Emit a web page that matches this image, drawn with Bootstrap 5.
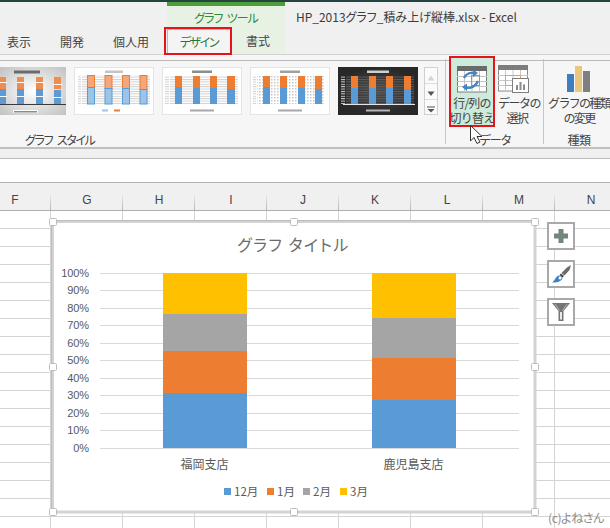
<!DOCTYPE html>
<html lang="ja">
<head>
<meta charset="utf-8">
<title>Excel</title>
<link rel="stylesheet" href="https://cdn.jsdelivr.net/npm/bootstrap@5.3.0/dist/css/bootstrap.min.css">
<style>
html,body{margin:0;width:610px;height:528px;overflow:hidden;background:#fff}
body{font-family:"Noto Sans CJK JP","Liberation Sans",sans-serif;font-size:12px;line-height:16px;color:#444;font-feature-settings:"palt"}
.top-area{height:55px;background:#f0f0f0;border-top:2px solid #24453f;border-bottom:1px solid #d2d2d2}
.tab-left{width:167px;gap:29px;padding:0 0 4px 7px}
.tool-group{width:118px;background:#e7f1e4;border-top:4px solid #4c9f38;position:relative}
.tool-name{color:#2f8a3a;text-align:center;padding-top:4px;height:23px;letter-spacing:-1.1px;word-spacing:3px;font-size:12px}
.ctx-tab{height:25px;padding-top:4px;text-align:center}
.tab-active{width:64px;background:#f4f4f4;border:1px solid #b9b9b9;border-bottom:0;color:#1f7a3d;letter-spacing:-1.4px}
.tab-plain{flex:1}
.red-mark{position:absolute;border:2px solid #e8131a;pointer-events:none}
.mark-tab{left:-3px;top:21px;width:68px;height:28px}
.doc-title{padding:7px 0 0 11px;letter-spacing:-.02px;white-space:nowrap;font-size:12px;color:#3c3c3c}
.ribbon{height:94px;background:#f6f6f6;border-bottom:2px solid #c0c0c0}
.ribbon-band{height:6px;border-bottom:1px solid #b9b9b9}
.ribbon-body{height:87px}
.gal-group{width:445px;height:85px;position:relative}
.gal{gap:8px;padding-top:6px;height:66px}
.thumb{display:block;flex:none;background:#fff}
.gal-scroll{width:14px;height:48px;margin-left:-2px;border:1px solid #d0d0d0;background:#fbfbfb}
.scroll-cell{height:16px;line-height:16px;text-align:center;border-bottom:1px solid #dcdcdc}
.scroll-cell:last-child{border:0}
.group-label{text-align:center;font-size:12px;line-height:16px;padding-top:5px}
.gal-label{padding-left:25px;letter-spacing:-1.3px;word-spacing:3px;text-align:left}
.data-group{width:99px;border-left:1px solid #c6c6c6;border-right:1px solid #c6c6c6;height:85px;margin-top:-2px;position:relative}
.rb-btn{display:block;height:71px;margin-top:-3px;padding:7px 0 0;border:0;background:transparent;color:#444;font-size:12px;line-height:15px;text-align:center;white-space:nowrap}
.btn-switch{width:46px;margin-left:3px;margin-right:3px;background:#cdeadb;position:relative;letter-spacing:-.8px}
.btn-select{width:38px;letter-spacing:-1.5px}
.mark-btn{left:0;top:0;right:0;bottom:0}
.rb-btn svg{display:block;margin:0 auto 2px}
.data-label{letter-spacing:-1px;padding-left:1px}
.type-group{width:66px;position:relative;margin-top:-2px}
.btn-type{width:66px;padding-left:4px;letter-spacing:-1.7px}
.type-label{padding-left:4px;letter-spacing:-.4px}
.sub-band{height:10px;background:#f0f0f0;border-bottom:1px solid #bcbcbc}
.formula{height:24px;background:#fff;border-bottom:1px solid #b4b4b4}
.col-head{height:28px;background:#f0f0f0;border-bottom:1px solid #b0b0b0;font-family:"Liberation Sans",sans-serif;font-size:12px;margin:0;overflow:hidden}
.col-cell{flex:0 0 72px;text-align:center;line-height:34px;position:relative;color:#444}
.col-cell:first-child{margin-left:-21px}
.col-cell::after{content:"";position:absolute;right:0;top:10px;bottom:0;width:1px;background:linear-gradient(#f0f0f0,#b5b5b5)}
.sheet{position:relative;height:317px;background-color:#fff;background-image:linear-gradient(to left,#d4d4d4 1px,transparent 1px),linear-gradient(to top,#d4d4d4 1px,transparent 1px);background-size:72px 18px;background-position:-21px 0}
.chart-float{position:absolute;left:48px;top:6px;display:block}
.chart-float text{font-family:"Noto Sans CJK JP","Liberation Sans",sans-serif;fill:#595959;font-feature-settings:"palt"}
.chart-float .ax text{font-family:"Liberation Sans",sans-serif;font-size:11px;letter-spacing:-.1px}
.chart-float .chart-name{fill:#6c6c6c;letter-spacing:1.5px}
.side-tools{position:absolute;left:547px;top:11px;gap:10px}
.side-btn{width:28px;height:28px;padding:0;background:#fff;border:2px solid #a9a9a9;border-radius:0;display:flex;align-items:center;justify-content:center}
.stamp{position:absolute;left:548px;top:299px;font-size:12px;color:#8c8c8c;line-height:16px;letter-spacing:-.4px}
.pointer{position:absolute;left:466px;top:122px;display:block}
</style>
</head>
<body>
<div class="position-relative">
<div class="top-area d-flex">
  <div class="tab-left d-flex align-items-end"><span>表示</span><span>開発</span><span>個人用</span></div>
  <div class="tool-group">
    <div class="tool-name">グラフ ツール</div>
    <div class="d-flex">
      <div class="ctx-tab tab-active">デザイン</div>
      <div class="ctx-tab tab-plain">書式</div>
    </div>
    <div class="red-mark mark-tab"></div>
  </div>
  <div class="doc-title">HP_2013グラフ_積み上げ縦棒.xlsx - Excel</div>
</div>
<div class="ribbon">
  <div class="ribbon-band"></div>
  <div class="ribbon-body d-flex">
    <div class="gal-group">
      <div class="gal d-flex">
        <svg class="thumb" width="66" height="48" viewBox="14 0 66 48">
          <defs>
            <radialGradient id="g1" r=".75"><stop offset="0" stop-color="#fff"/><stop offset="1" stop-color="#bdbdbd"/></radialGradient>
            <pattern id="hat" width="3" height="3" patternUnits="userSpaceOnUse"><rect width="3" height="3" fill="#fff"/><rect width="1.5" height="1.5" fill="#c8c8c8"/></pattern>
            <pattern id="lines" width="4" height="2.4" patternUnits="userSpaceOnUse"><rect y="0" width="4" height="1" fill="#cfcfcf"/></pattern>
            <pattern id="darklines" width="4" height="2.4" patternUnits="userSpaceOnUse"><rect width="4" height="1" fill="#5e5e5e"/></pattern>
            <radialGradient id="g5"><stop offset="0" stop-color="#4a4a4a"/><stop offset="1" stop-color="#282828"/></radialGradient>
          </defs>
          <rect x="14" width="66" height="48" fill="url(#g1)"/>
          <rect x="28" y="3.5" width="26" height="3" fill="#6b6b6b"/>
          <g fill="#f08d4c"><rect x="13" y="10" width="7" height="12"/><rect x="31" y="10" width="7" height="12"/><rect x="50" y="10" width="7" height="12"/><rect x="68" y="10" width="7" height="12"/></g>
          <g fill="#5f9ad2"><rect x="13" y="22" width="7" height="15"/><rect x="31" y="22" width="7" height="15"/><rect x="50" y="22" width="7" height="15"/><rect x="68" y="23" width="7" height="14"/></g>
          <g fill="#fff"><rect x="30" y="15" width="9" height="1"/><rect x="49" y="15" width="9" height="1"/><rect x="67" y="17" width="9" height="1"/><rect x="30" y="29" width="9" height="1"/><rect x="49" y="29" width="9" height="1"/><rect x="67" y="30" width="9" height="1"/><rect x="14" y="29" width="7" height="1"/><rect x="14" y="15" width="7" height="1"/></g>
          <rect x="14" y="37" width="66" height="1" fill="#3a3a3a"/>
          <rect x="27" y="43" width="25" height="3" fill="#fff"/><rect x="28" y="44" width="23" height="1.5" fill="#8a8a8a"/>
        </svg>
        <svg class="thumb" width="80" height="48" viewBox="0 0 80 48">
          <rect x=".5" y=".5" width="79" height="47" fill="#fff" stroke="#e4e4e4"/>
          <rect x="31" y="3.5" width="18" height="2.5" fill="#c4c4c4"/>
          <rect x="8" y="8" width="68" height="29" fill="url(#lines)"/>
          <rect x="4" y="8" width="3" height="29" fill="url(#lines)"/>
          <g fill="#f4a77d" stroke="#ed7d31"><rect x="13.5" y="8.5" width="7" height="12"/><rect x="31" y="8.5" width="7" height="13"/><rect x="48.5" y="8.5" width="7" height="13"/><rect x="66" y="8.5" width="7" height="14"/></g>
          <g fill="#9dc3e6" stroke="#5b9bd5"><rect x="13.5" y="20.5" width="7" height="16.5"/><rect x="31" y="21.5" width="7" height="15.5"/><rect x="48.5" y="21.5" width="7" height="15.5"/><rect x="66" y="22.5" width="7" height="14.5"/></g>
          <rect x="28" y="42.5" width="6" height="2" fill="#9dc3e6"/><rect x="40" y="42.5" width="6" height="2" fill="#ed7d31"/>
        </svg>
        <svg class="thumb" width="80" height="48" viewBox="0 0 80 48">
          <rect x=".5" y=".5" width="79" height="47" fill="#fff" stroke="#e4e4e4"/>
          <rect x="30" y="3.5" width="20" height="2.5" fill="#8c8c8c"/>
          <rect x="8" y="9" width="68" height="28" fill="url(#lines)"/>
          <rect x="3" y="9" width="4" height="28" fill="url(#lines)"/>
          <g fill="#ed7d31"><rect x="13" y="9" width="7" height="11"/><rect x="31" y="9" width="7" height="12"/><rect x="48" y="9" width="7" height="12"/><rect x="65" y="9" width="8" height="13"/></g>
          <g fill="#5b9bd5"><rect x="13" y="20" width="7" height="17"/><rect x="31" y="21" width="7" height="16"/><rect x="48" y="21" width="7" height="16"/><rect x="65" y="22" width="8" height="15"/></g>
          <rect x="28" y="42.5" width="24" height="2" fill="#a8a8a8"/>
        </svg>
        <svg class="thumb" width="80" height="48" viewBox="0 0 80 48">
          <rect x=".5" y=".5" width="79" height="47" fill="#fff" stroke="#e4e4e4"/>
          <rect x="30" y="3.5" width="20" height="2.5" fill="#a0a0a0"/>
          <rect x="7" y="9" width="68" height="28" fill="url(#hat)"/>
          <rect x="3" y="9" width="3" height="28" fill="url(#lines)"/>
          <g fill="#ed7d31"><rect x="13" y="9" width="7" height="11"/><rect x="30" y="9" width="7" height="12"/><rect x="48" y="9" width="7" height="12"/><rect x="65" y="9" width="7" height="13"/></g>
          <g fill="#5b9bd5"><rect x="13" y="20" width="7" height="17"/><rect x="30" y="21" width="7" height="16"/><rect x="48" y="21" width="7" height="16"/><rect x="65" y="22" width="7" height="15"/></g>
          <rect x="28" y="42.5" width="24" height="2" fill="#a8a8a8"/>
        </svg>
        <svg class="thumb" width="80" height="48" viewBox="0 0 80 48">
          <rect width="80" height="48" fill="url(#g5)"/>
          <rect x="29" y="3.5" width="22" height="2.5" fill="#cfcfcf"/>
          <rect x="8" y="9" width="68" height="28" fill="url(#darklines)"/>
          <rect x="3" y="9" width="4" height="28" fill="url(#lines)"/>
          <g fill="#ed7d31"><rect x="13" y="9" width="7" height="12"/><rect x="31" y="9" width="7" height="12"/><rect x="48" y="9" width="7" height="12"/><rect x="66" y="9" width="7" height="13"/></g>
          <g fill="#5b9bd5"><rect x="13" y="21" width="7" height="16"/><rect x="31" y="21" width="7" height="16"/><rect x="48" y="21" width="7" height="16"/><rect x="66" y="22" width="7" height="15"/></g>
          <rect x="5" y="37" width="72" height="1" fill="#e5e5e5"/>
          <rect x="28" y="42.5" width="24" height="2" fill="#b5b5b5"/>
        </svg>
        <div class="gal-scroll flex-none">
          <div class="scroll-cell"><svg width="8" height="6" viewBox="0 0 8 6"><path d="M4 .5 7.5 5.5H.5Z" fill="#d4d4d4"/></svg></div>
          <div class="scroll-cell"><svg width="8" height="6" viewBox="0 0 8 6"><path d="M.5.5H7.5L4 5Z" fill="#555"/></svg></div>
          <div class="scroll-cell"><svg width="8" height="7" viewBox="0 0 8 7"><path d="M0 .5H8V1.5H0ZM.5 3H7.5L4 6.5Z" fill="#555"/></svg></div>
        </div>
      </div>
      <div class="group-label gal-label">グラフ スタイル</div>
    </div>
    <div class="data-group">
      <div class="d-flex">
        <button type="button" class="rb-btn btn-switch">
          <svg width="30" height="27" viewBox="0 0 30 27">
            <rect x=".5" y=".5" width="29" height="25.5" fill="#fff" stroke="#7c7c7c"/>
            <rect width="30" height="5" fill="#6b6b6b"/>
            <path d="M0 10.5H30M0 15.5H30M0 20.5H30M7.5 5V26M15 5V26M22.5 5V26" stroke="#c4c4c4" fill="none"/>
            <rect x="14.5" y="9.5" width="8" height="10" fill="none" stroke="#ed7d31"/>
            <path d="M7 12C9 8 13 6.500 17 7" fill="none" stroke="#3f87c9" stroke-width="2.400"/>
            <path d="M16 3.500 21 7 16 11Z" fill="#3f87c9"/>
            <path d="M21 15C19 20 14 23 9 21.500" fill="none" stroke="#3f87c9" stroke-width="2.400"/>
            <path d="M10 17.500 5 21 10 25Z" fill="#3f87c9"/>
          </svg>
          行/列の<br>切り替え
          <span class="red-mark mark-btn"></span>
        </button>
        <button type="button" class="rb-btn btn-select">
          <svg width="33" height="28" viewBox="0 0 33 28" class="ms-0">
            <rect x=".5" y=".5" width="29" height="25.5" fill="#fff" stroke="#8a8a8a"/>
            <rect width="30" height="5" fill="#7c7c7c"/>
            <path d="M0 10.500H30M0 15.500H30M0 20.500H30M7.500 5V26M15 5V26M22.500 5V26" stroke="#c9c9c9" fill="none"/>
            <path d="M7.500 10.500H22.500V15.500H15V20.500H7.500Z" fill="none" stroke="#ed9a5c"/>
            <rect x="14.500" y="13.500" width="16" height="14" fill="#fff" stroke="#7f7f7f"/>
            <path d="M18 25V20H20V25ZM21.500 25V17H23.500V25ZM25 25V19.500H27V25Z" fill="#8a8a8a"/>
          </svg>
          データの<br>選択
        </button>
      </div>
      <div class="group-label data-label">データ</div>
    </div>
    <div class="type-group">
      <button type="button" class="rb-btn btn-type">
        <svg width="24" height="27" viewBox="0 0 24 27">
          <rect x="0" y="8" width="7" height="18" fill="#3f7fbf"/>
          <rect x="8" y="0" width="7" height="26" fill="#eac67f"/>
          <rect x="16" y="5" width="7" height="21" fill="#7f7f7f"/>
        </svg>
        グラフの種類<br>の変更
      </button>
      <div class="group-label type-label">種類</div>
    </div>
  </div>
</div>
<div class="sub-band"></div>
<div class="formula"></div>
<div class="col-head d-flex">
  <div class="col-cell">F</div><div class="col-cell">G</div><div class="col-cell">H</div><div class="col-cell">I</div><div class="col-cell">J</div><div class="col-cell">K</div><div class="col-cell">L</div><div class="col-cell">M</div><div class="col-cell">N</div>
</div>
<div class="sheet">
  <svg class="chart-float" width="492" height="300" viewBox="48 217 492 300">
    <rect x="52.500" y="221.500" width="482.500" height="290.500" fill="#fff" stroke="#d3d3d3" stroke-width="3"/>
    <path d="M51.500 512V220.500H535" fill="none" stroke="#bcbcbc"/>
    <text class="chart-name" x="293.500" y="251" font-size="16" text-anchor="middle">グラフ タイトル</text>
    <path d="M100 273.500H519M100 290.500H519M100 308.500H519M100 325.500H519M100 343.500H519M100 360.500H519M100 378.500H519M100 395.500H519M100 413.500H519M100 430.500H519M100 448.500H519" stroke="#d9d9d9"/>
    <g class="ax" text-anchor="end">
      <text x="89" y="276.500">100%</text><text x="89" y="294">90%</text><text x="89" y="311.500">80%</text><text x="89" y="329">70%</text><text x="89" y="346.500">60%</text><text x="89" y="364">50%</text><text x="89" y="381.500">40%</text><text x="89" y="399">30%</text><text x="89" y="416.500">20%</text><text x="89" y="434">10%</text><text x="89" y="451.500">0%</text>
    </g>
    <rect x="163" y="273" width="84" height="41" fill="#ffc000"/>
    <rect x="163" y="314" width="84" height="37" fill="#a5a5a5"/>
    <rect x="163" y="351" width="84" height="42" fill="#ed7d31"/>
    <rect x="163" y="393" width="84" height="55" fill="#5b9bd5"/>
    <rect x="372" y="273" width="84" height="45" fill="#ffc000"/>
    <rect x="372" y="318" width="84" height="40" fill="#a5a5a5"/>
    <rect x="372" y="358" width="84" height="42" fill="#ed7d31"/>
    <rect x="372" y="400" width="84" height="48" fill="#5b9bd5"/>
    <text x="204.500" y="469" font-size="12" text-anchor="middle">福岡支店</text>
    <text x="413.500" y="469" font-size="12" text-anchor="middle">鹿児島支店</text>
    <rect x="224" y="488" width="7" height="7" fill="#5b9bd5"/><text x="234" y="495.500" font-size="11.500">12月</text>
    <rect x="267" y="488" width="7" height="7" fill="#ed7d31"/><text x="277" y="495.500" font-size="11.500">1月</text>
    <rect x="303" y="488" width="7" height="7" fill="#a5a5a5"/><text x="313" y="495.500" font-size="11.500">2月</text>
    <rect x="340" y="488" width="7" height="7" fill="#ffc000"/><text x="350" y="495.500" font-size="11.500">3月</text>
    <g fill="#fff" stroke="#bdbdbd">
      <rect x="49.500" y="218.500" width="7" height="7" rx="1"/><rect x="290.500" y="218.500" width="7" height="7" rx="1"/><rect x="531.500" y="218.500" width="7" height="7" rx="1"/>
      <rect x="49.500" y="363.500" width="7" height="7" rx="1"/><rect x="531.500" y="363.500" width="7" height="7" rx="1"/>
      <rect x="49.500" y="508.500" width="7" height="7" rx="1"/><rect x="290.500" y="508.500" width="7" height="7" rx="1"/><rect x="531.500" y="508.500" width="7" height="7" rx="1"/>
    </g>
  </svg>
  <div class="side-tools d-flex flex-column">
    <button type="button" class="side-btn" aria-label="追加">
      <svg width="14" height="14" viewBox="0 0 14 14"><path d="M4.500 0H9.500V4.500H14V9.500H9.500V14H4.500V9.500H0V4.500H4.500Z" fill="#75857c"/><path d="M7 2V12M2 7H12" stroke="#58a07a" stroke-dasharray="1 1.500"/></svg>
    </button>
    <button type="button" class="side-btn" aria-label="スタイル">
      <svg width="19" height="18" viewBox="0 0 19 18"><path d="M19 0 17.500 5 12.500 10.500 9.500 8 15 2.500Z" fill="#6a6a6a"/><path d="M9 8.500 12 11 10.500 12.500 7.500 10Z" fill="#444"/><path d="M6.500 10.500 10 13.500C9 16 7 17.500 0 17.500 3 15.500 3.500 11.500 6.500 10.500Z" fill="#3f7fc4"/><circle cx="8" cy="13" r="2" fill="#fff" stroke="#4a86c8"/></svg>
    </button>
    <button type="button" class="side-btn" aria-label="フィルター">
      <svg width="18" height="18" viewBox="0 0 18 18"><path d="M0 0H18L11.500 8V18H6.500V8Z" fill="#767676"/><path d="M8 9H10V16.500H8Z" fill="#e8e8e8"/><path d="M3 1 7.500 7.500M15 1 10.500 7.500" stroke="#b4b4b4" fill="none"/></svg>
    </button>
  </div>
  <div class="stamp">(c)よねさん</div>
</div>
<svg class="pointer" width="24" height="26" viewBox="466 122 24 26">
  <path d="M470.500 125.500V141L474 137.500 477 143.500 480 142 477 136.500H482Z" fill="#fff" stroke="#333" stroke-linejoin="round"/>
</svg>
</div>
<script src="https://cdn.jsdelivr.net/npm/bootstrap@5.3.0/dist/js/bootstrap.bundle.min.js"></script>
</body>
</html>
